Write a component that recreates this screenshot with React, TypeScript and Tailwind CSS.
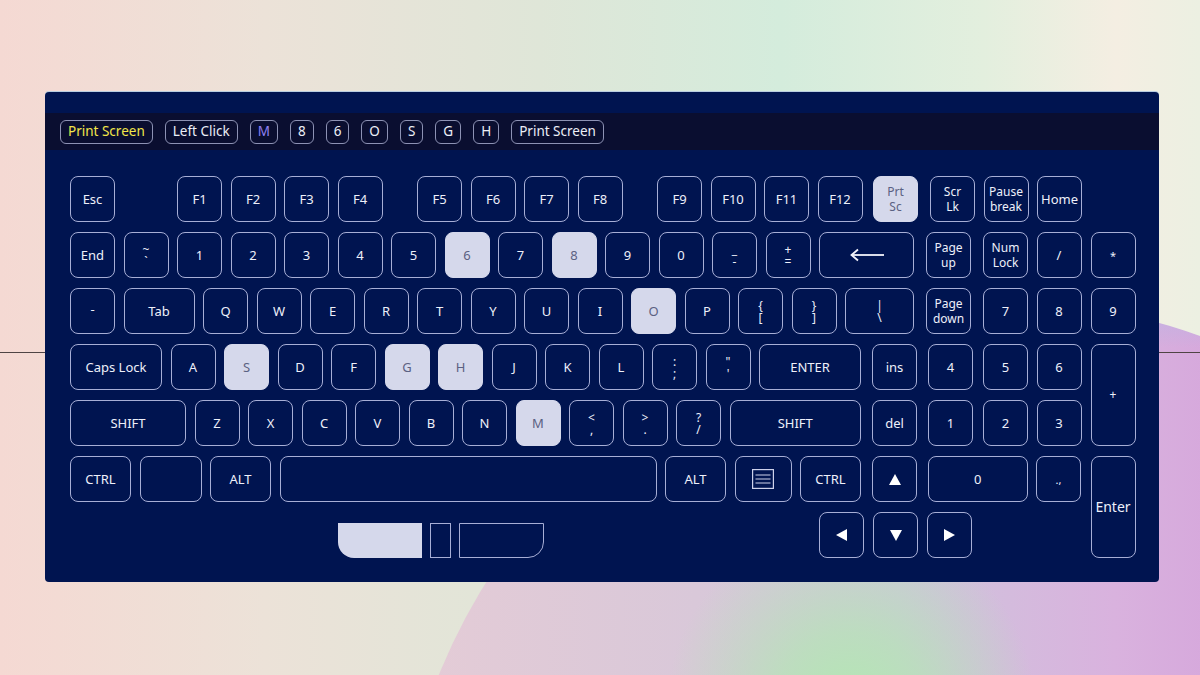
import type { ReactNode } from "react";

type K = { k?: ReactNode; c?: string; hl?: boolean };

function Two({ a, b }: { a: string; b: string }) {
  return (
    <span className="flex flex-col items-center text-[12px] leading-[15px]">
      <span>{a}</span>
      <span>{b}</span>
    </span>
  );
}

function Sym({ a, b }: { a: string; b: string }) {
  return (
    <span className="flex flex-col items-center gap-[1px] text-[12px] leading-[11px]">
      <span>{a}</span>
      <span>{b}</span>
    </span>
  );
}

function BackArrow() {
  return (
    <svg width="36" height="14" viewBox="0 0 36 14" fill="none" stroke="#f2f3fb" strokeWidth="1.8">
      <path d="M3 7H35" />
      <path d="M9 1.5L2.5 7L9 12.5" />
    </svg>
  );
}

function MenuIcon() {
  return (
    <svg width="22" height="20" viewBox="0 0 22 20" fill="none" stroke="#cdd1ea" strokeWidth="1.2">
      <rect x="0.6" y="0.6" width="20.8" height="18.8" />
      <path d="M3.5 6H18.5M3.5 10H18.5M3.5 14H18.5" />
    </svg>
  );
}

function Tri({ dir }: { dir: "up" | "down" | "left" | "right" }) {
  const pts = {
    up: "6,0 12,11 0,11",
    down: "0,0 12,0 6,11",
    left: "11,0 11,12 0,6",
    right: "0,0 11,6 0,12",
  }[dir];
  const w = dir === "up" || dir === "down" ? 12 : 11;
  const h = dir === "up" || dir === "down" ? 11 : 12;
  return (
    <svg width={w} height={h} viewBox={`0 0 ${w} ${h}`}>
      <polygon points={pts} fill="#ffffff" />
    </svg>
  );
}

function Key({ k, c = "", hl }: K) {
  return (
    <div
      className={`flex h-[46px] shrink-0 items-center justify-center rounded-[8px] border text-[13px] leading-none ${
        hl
          ? "border-[#d5d8eb] bg-[#d5d8eb] text-[#5b6182]"
          : "border-[#a7aed6] text-[#eef0fa]"
      } ${c.includes("w-[") ? "" : "w-[45px]"} ${c}`}
    >
      {k}
    </div>
  );
}

const rows: K[][] = [
  [
    { k: "Esc" },
    { k: "F1", c: "ml-[53.5px]" },
    { k: "F2" },
    { k: "F3" },
    { k: "F4" },
    { k: "F5", c: "ml-[26px]" },
    { k: "F6" },
    { k: "F7" },
    { k: "F8" },
    { k: "F9", c: "ml-[26px]" },
    { k: "F10" },
    { k: "F11" },
    { k: "F12" },
    { k: <Two a="Prt" b="Sc" />, c: "ml-[2px]", hl: true },
    { k: <Two a="Scr" b="Lk" />, c: "ml-[3.5px]" },
    { k: <Two a="Pause" b="break" /> },
    { k: "Home" },
  ],
  [
    { k: "End" },
    { k: <Sym a="~" b="`" /> },
    { k: "1" },
    { k: "2" },
    { k: "3" },
    { k: "4" },
    { k: "5" },
    { k: "6", hl: true },
    { k: "7" },
    { k: "8", hl: true },
    { k: "9" },
    { k: "0" },
    { k: <Sym a="_" b="-" /> },
    { k: <Sym a="+" b="=" /> },
    { k: <BackArrow />, c: "w-[95px]" },
    { k: <Two a="Page" b="up" />, c: "ml-[3.5px]" },
    { k: <Two a="Num" b="Lock" />, c: "ml-[3.5px]" },
    { k: "/" },
  ],
  [
    { k: <span className="-mt-[4px]">-</span> },
    { k: "Tab", c: "w-[71px]" },
    { k: "Q" },
    { k: "W" },
    { k: "E" },
    { k: "R" },
    { k: "T" },
    { k: "Y" },
    { k: "U" },
    { k: "I" },
    { k: "O", hl: true },
    { k: "P" },
    { k: <Sym a="{" b="[" /> },
    { k: <Sym a="}" b="]" /> },
    { k: <Sym a="|" b="\" />, c: "w-[69px]" },
    { k: <Two a="Page" b="down" />, c: "ml-[3.5px]" },
    { k: "7", c: "ml-[3.5px]" },
    { k: "8" },
  ],
  [
    { k: "Caps Lock", c: "w-[92px]" },
    { k: "A" },
    { k: "S", hl: true },
    { k: "D" },
    { k: "F" },
    { k: "G", hl: true },
    { k: "H", hl: true },
    { k: "J" },
    { k: "K" },
    { k: "L" },
    { k: <Sym a=":" b=";" /> },
    { k: <Sym a={'"'} b="'" /> },
    { k: "ENTER", c: "w-[102px]" },
    { k: "ins", c: "ml-[2.5px]" },
    { k: "4", c: "ml-[2.5px]" },
    { k: "5", c: "ml-[1.5px]" },
    { k: "6" },
  ],
  [
    { k: "SHIFT", c: "w-[116px]" },
    { k: "Z" },
    { k: "X" },
    { k: "C" },
    { k: "V" },
    { k: "B" },
    { k: "N" },
    { k: "M", hl: true },
    { k: <Sym a="<" b="," /> },
    { k: <Sym a=">" b="." /> },
    { k: <Sym a="?" b="/" /> },
    { k: "SHIFT", c: "w-[131.5px]" },
    { k: "del", c: "ml-[2.5px]" },
    { k: "1", c: "ml-[2.5px]" },
    { k: "2", c: "ml-[1.5px]" },
    { k: "3" },
  ],
  [
    { k: "CTRL", c: "w-[61px]" },
    { k: "", c: "w-[62px]" },
    { k: "ALT", c: "w-[61px]" },
    { k: "", c: "w-[377px]" },
    { k: "ALT", c: "w-[61px]" },
    { k: <MenuIcon />, c: "w-[57px]" },
    { k: "CTRL", c: "w-[61px]" },
    { k: <Tri dir="up" />, c: "ml-[2.5px]" },
    { k: "0", c: "w-[99.5px] ml-[2.5px]" },
    { k: <span className="text-[11px]">.,</span> },
  ],
];

const chips = ["Left Click", "M", "8", "6", "O", "S", "G", "H", "Print Screen"];

export default function App() {
  return (
    <div
      className="relative h-[675px] w-[1200px] overflow-hidden bg-[linear-gradient(90deg,#f5d9d3_0%,#ece2d8_22%,#dfe6d8_45%,#d4ecdc_65%,#e3efde_82%,#f4eee2_93%,#ecf0e2_100%)] pl-[45px] pt-[92px]"
      style={{ fontFamily: '"Noto Sans", "Open Sans", sans-serif' }}
    >
      {/* background blob and guide line */}
      <div className="absolute left-[395px] top-[300px] h-[1200px] w-[1200px] rounded-full bg-[linear-gradient(180deg,#bdb3e3_0%,rgba(189,179,227,0)_4%),radial-gradient(circle_at_38%_34%,#b3e7b3_0%,rgba(180,230,180,0.7)_7%,rgba(180,230,180,0)_17%),linear-gradient(90deg,#e5ccd6_0%,#d9c8d9_25%,#cfc5dc_42%,#d9b2de_60%,#d6a8dc_68%)]" />
      <div className="absolute left-0 right-0 top-[352px] h-px bg-[#4f4444]" />

      <div className="relative flex h-[490px] w-[1114px] flex-col rounded-[4px] bg-[#001450] pt-[21px] shadow-[0_-1px_0_#b9cde0]">
        <div className="flex h-[37px] items-center gap-[12px] bg-[#0a0e30] pl-[15px]">
          <span className="flex h-[24px] items-center rounded-[6px] border border-[#8d92b4] px-[7px] text-[13.5px] text-[#f2e64a]">
            Print Screen
          </span>
          {chips.map((c, i) => (
            <span
              key={i}
              className={`flex h-[24px] items-center rounded-[6px] border border-[#8d92b4] px-[7px] text-[13.5px] ${
                c === "M" ? "text-[#8f80f3]" : "text-[#eceef7]"
              }`}
            >
              {c}
            </span>
          ))}
        </div>

        <div className="mt-[26px] flex gap-[8.5px] pl-[25px]">
          <div className="flex flex-col gap-[10px]">
            {rows.map((row, i) => (
              <div key={i} className="flex gap-[8.5px]">
                {row.map((key, j) => (
                  <Key key={j} {...key} />
                ))}
              </div>
            ))}
            <div className="flex h-[46px]">
              <div className="ml-[268px] mt-[11px] h-[35px] w-[84px] rounded-bl-[16px] bg-[#d5d8eb]" />
              <div className="ml-[8px] mt-[11px] h-[35px] w-[21px] border border-[#a7aed6]" />
              <div className="ml-[8px] mt-[11px] h-[35px] w-[85px] rounded-br-[16px] border border-[#a7aed6]" />
              <Key k={<Tri dir="left" />} c="ml-[275px]" />
              <Key k={<Tri dir="down" />} c="ml-[9px]" />
              <Key k={<Tri dir="right" />} c="ml-[8.5px]" />
            </div>
          </div>
          <div className="flex w-[45px] flex-col gap-[10px]">
            <div className="h-[46px]" />
            <Key k={<span className="text-[11px]">*</span>} />
            <Key k="9" />
            <Key k={<span className="text-[12px]">+</span>} c="h-[102px]" />
            <Key k={<span className="text-[14px]">Enter</span>} c="h-[102px]" />
          </div>
        </div>
      </div>
    </div>
  );
}
